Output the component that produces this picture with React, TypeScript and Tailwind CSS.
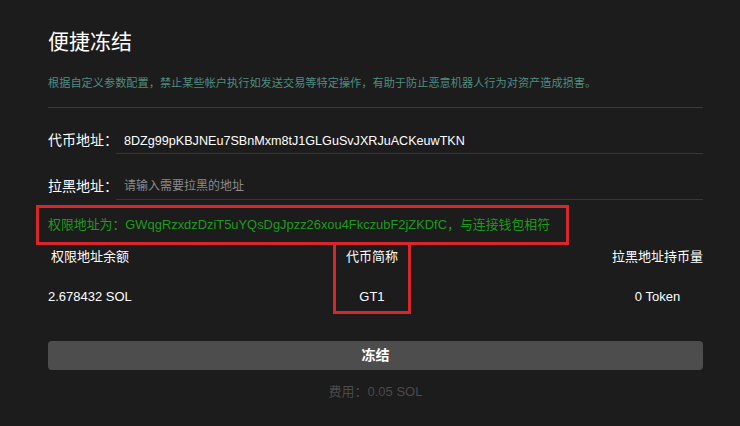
export default function App() {
  return (
    <div
      className="min-h-[426px] w-[740px] bg-[#1c1c1c] text-white"
      style={{ fontFamily: '"Liberation Sans", "Noto Sans CJK SC", sans-serif' }}
    >
      <div className="ml-12 w-[655px] pt-[26px]">
        {/* タイトル */}
        <h1 className="text-[21px] leading-[32px] font-normal">便捷冻结</h1>

        {/* 説明 */}
        <p className="mt-[16px] whitespace-nowrap text-[11.2px] leading-[18px] text-[#4f8c80]">
          根据自定义参数配置，禁止某些帐户执行如发送交易等特定操作，有助于防止恶意机器人行为对资产造成损害。
        </p>
        <div className="mt-[15px] h-px bg-[#3a3a3a]" />

        {/* 入力欄 */}
        <div className="mt-[22px] flex items-end">
          <span className="w-[68px] shrink-0 whitespace-nowrap pb-[4px] text-[14px] leading-[20px]">代币地址：</span>
          <div className="flex-1 border-b border-[#363636] pb-[2px] pl-2 text-[12.6px] leading-[20px]">
            8DZg99pKBJNEu7SBnMxm8tJ1GLGuSvJXRJuACKeuwTKN
          </div>
        </div>
        <div className="mt-[22px] flex items-end">
          <span className="w-[68px] shrink-0 whitespace-nowrap pb-[4px] text-[14px] leading-[20px]">拉黑地址：</span>
          <div className="flex-1 border-b border-[#363636] pb-[3px] pl-2 text-[12px] leading-[20px] text-[#8a8a8a]">
            请输入需要拉黑的地址
          </div>
        </div>

        {/* 権限アドレス */}
        <div className="-ml-3 mt-[5px] w-[533px] whitespace-nowrap border-[3px] border-[#d8262d] px-[9px] py-[8px] text-[12.9px] leading-[18px] text-[#1f9a1f]">
          权限地址为：GWqgRzxdzDziT5uYQsDgJpzz26xou4FkczubF2jZKDfC，与连接钱包相符
        </div>

        {/* 情報 */}
        <div className="flex justify-between whitespace-nowrap text-[13px]">
          <div className="flex flex-col items-center pt-[2px]">
            <span className="leading-[20px]">权限地址余额</span>
            <span className="mt-[20px] leading-[20px]">2.678432 SOL</span>
          </div>
          <div className="-mt-[3px] flex w-[78px] flex-col items-center border-[3px] border-[#d8262d] pt-[2px] pb-[4px]">
            <span className="leading-[20px]">代币简称</span>
            <span className="mt-[20px] leading-[20px]">GT1</span>
          </div>
          <div className="flex flex-col items-center pt-[2px]">
            <span className="leading-[20px]">拉黑地址持币量</span>
            <span className="mt-[20px] leading-[20px]">0 Token</span>
          </div>
        </div>

        {/* ボタン */}
        <button className="mt-[27px] h-[29px] w-full rounded-[4px] bg-[#4d4d4d] text-[14px] font-bold text-white">
          冻结
        </button>
        <p className="mt-[13px] text-center text-[13px] leading-[18px] text-[#4a4a4a]">费用：0.05 SOL</p>
      </div>
    </div>
  )
}
